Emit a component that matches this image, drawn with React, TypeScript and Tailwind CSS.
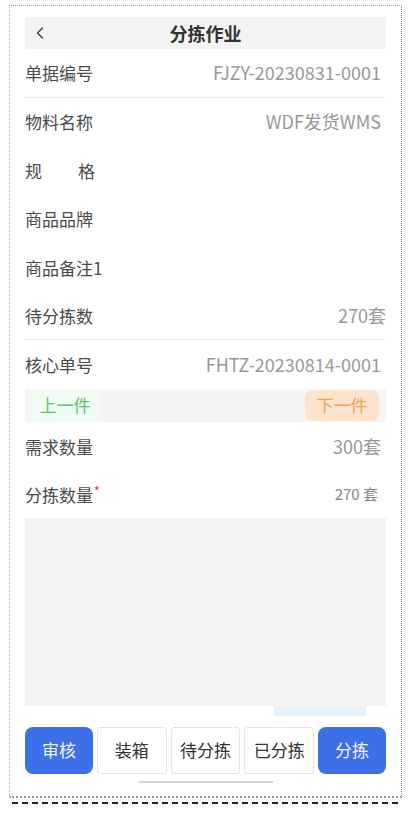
import { ChevronLeft } from 'lucide-react';

const rows = [
  { label: '单据编号', value: 'FJZY-20230831-0001', line: true },
  { label: '物料名称', value: 'WDF发货WMS', line: false },
  { label: '规格', value: '', line: false, spread: true },
  { label: '商品品牌', value: '', line: false },
  { label: '商品备注1', value: '', line: false },
  { label: '待分拣数', value: '270套', line: true, flush: true },
  { label: '核心单号', value: 'FHTZ-20230814-0001', line: false },
];

function Row({ label, value, line, spread, flush }: { label: string; value: string; line?: boolean; spread?: boolean; flush?: boolean }) {
  return (
    <div className={`h-[48.5px] flex items-center justify-between ${line ? 'border-b border-dotted border-[#d8d8d8]' : ''}`}>
      {spread ? (
        <div className="flex w-[70px] justify-between text-[17px] text-[#4a4a4a]">
          <span>规</span>
          <span>格</span>
        </div>
      ) : (
        <span className="text-[17px] text-[#4a4a4a]">{label}</span>
      )}
      <span className={`text-[18px] text-[#999] ${flush ? '' : 'mr-[5px]'}`}>{value}</span>
    </div>
  );
}

export default function App() {
  const tabs = ['审核', '装箱', '待分拣', '已分拣', '分拣'];

  return (
    <div
      className="w-[413px] h-[813px] bg-white overflow-hidden"
      style={{ fontFamily: '"Noto Sans CJK SC", "Noto Sans", sans-serif' }}
    >
      <div className="ml-[9px] mt-[5px] w-[393px] h-[793px] border border-dotted border-[#aaa] border-r-[#777] border-b-2 border-b-[#999] flex flex-col px-[15px]">
        {/* Header */}
        <div className="mt-[11px] h-[32px] bg-[#f3f3f3] flex items-center relative">
          <ChevronLeft size={20} strokeWidth={1.8} className="absolute left-[5px] text-[#444]" />
          <span className="mx-auto text-[18px] font-bold text-[#333]">分拣作业</span>
        </div>

        {rows.map(r => (
          <Row key={r.label} {...r} />
        ))}

        {/* Prev / Next */}
        <div className="h-[33px] bg-[#f5f5f5] flex items-center justify-between px-[5px]">
          <div className="h-[33px] w-[70px] bg-[#f1faf3] flex items-center justify-center text-[17px] text-[#5cc46c]">
            上一件
          </div>
          <div className="h-[31px] w-[74px] mr-[2px] rounded-lg bg-[#fde3cc] flex items-center justify-center text-[17px] text-[#f4a259]">
            下一件
          </div>
        </div>

        <div className="h-[50px] flex items-center justify-between">
          <span className="text-[17px] text-[#4a4a4a]">需求数量</span>
          <span className="text-[18px] text-[#999] mr-[5px]">300套</span>
        </div>
        <div className="h-[46px] flex items-center justify-between">
          <span className="text-[17px] text-[#4a4a4a]">
            分拣数量<sup className="text-[#e22] text-[12px] ml-[1px]">*</sup>
          </span>
          <span className="text-[15px] text-[#888] mr-[8px]">270 套</span>
        </div>

        {/* Textarea */}
        <div className="h-[188px] bg-[#f3f3f3]" />
        <div className="flex justify-end pr-[20px]">
          <div className="h-[10px] w-[92px] bg-[#e6f3fb] rounded-b" />
        </div>

        {/* Bottom actions */}
        <div className="mt-[11px] flex gap-[4px]">
          {tabs.map((t, i) => {
            const primary = i === 0 || i === tabs.length - 1;
            return (
              <div
                key={t}
                className={`flex-1 h-[47px] flex items-center justify-center text-[17px] rounded-lg ${
                  primary
                    ? 'bg-[#3d6fe9] text-[#f0f4ff]'
                    : 'bg-white text-[#333] border border-dotted border-[#ccc] rounded-sm'
                }`}
              >
                {t}
              </div>
            );
          })}
        </div>
        <div className="mt-[7px] mx-auto h-[2px] w-[134px] bg-[#d4d4d4]" />
      </div>
      <div className="ml-[12px] mt-[4px] w-[386px] border-t-2 border-dashed border-[#222]" />
    </div>
  );
}
